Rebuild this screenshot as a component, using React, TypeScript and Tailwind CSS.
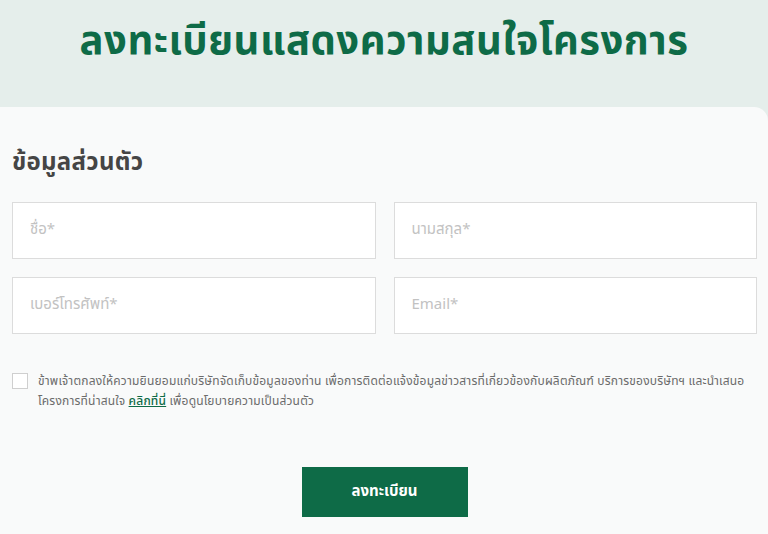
import React from "react";

const font = { fontFamily: '"Noto Sans Thai", "Noto Sans", "Liberation Sans", sans-serif' };

function Field({ label }: { label: string }) {
  return (
    <div className="h-[57px] border border-[#dcdcdc] bg-white flex items-center px-[17px]">
      <span className="text-[15px] text-[#c2c2c2]">{label}</span>
    </div>
  );
}

export default function App() {
  return (
    <div className="w-[768px] h-[534px] bg-[#e5eeeb] overflow-hidden flex flex-col" style={font}>
      <div className="h-[107px] flex items-start justify-center pt-[14px]">
        <h1 className="text-[40px] leading-[56px] font-bold text-[#0e6b47] tracking-[0.5px]">
          ลงทะเบียนแสดงความสนใจโครงการ
        </h1>
      </div>
      <div className="flex-1 bg-[#f9fafa] rounded-tr-[14px] pl-[12px] pr-[11px] pt-[38px]">
        <h2 className="text-[24px] leading-[36px] font-bold text-[#454545] mb-[21px] tracking-[0.3px]">ข้อมูลส่วนตัว</h2>
        <div className="grid grid-cols-2 gap-x-[18px] gap-y-[18px]">
          <Field label="ชื่อ*" />
          <Field label="นามสกุล*" />
          <Field label="เบอร์โทรศัพท์*" />
          <Field label="Email*" />
        </div>
        <div className="flex items-start mt-[37px]">
          <div className="w-[16px] h-[16px] border border-[#cfcfcf] bg-white shrink-0 mt-[2px]" />
          <div className="ml-[10px] text-[12px] leading-[20px] text-[#6b6b6b] tracking-[0.2px]">
            <div className="whitespace-nowrap">
              ข้าพเจ้าตกลงให้ความยินยอมแก่บริษัทจัดเก็บข้อมูลของท่าน เพื่อการติดต่อแจ้งข้อมูลข่าวสารที่เกี่ยวข้องกับผลิตภัณฑ์ บริการของบริษัทฯ และนำเสนอ
            </div>
            <div className="whitespace-nowrap">
              โครงการที่น่าสนใจ{" "}
              <a className="text-[#0e6b47] underline font-medium">คลิกที่นี่</a> เพื่อดูนโยบายความเป็นส่วนตัว
            </div>
          </div>
        </div>
        <div className="flex justify-center mt-[56px]">
          <button className="w-[166px] h-[50px] bg-[#0e6b47] text-white text-[15px] font-bold">
            ลงทะเบียน
          </button>
        </div>
      </div>
    </div>
  );
}
